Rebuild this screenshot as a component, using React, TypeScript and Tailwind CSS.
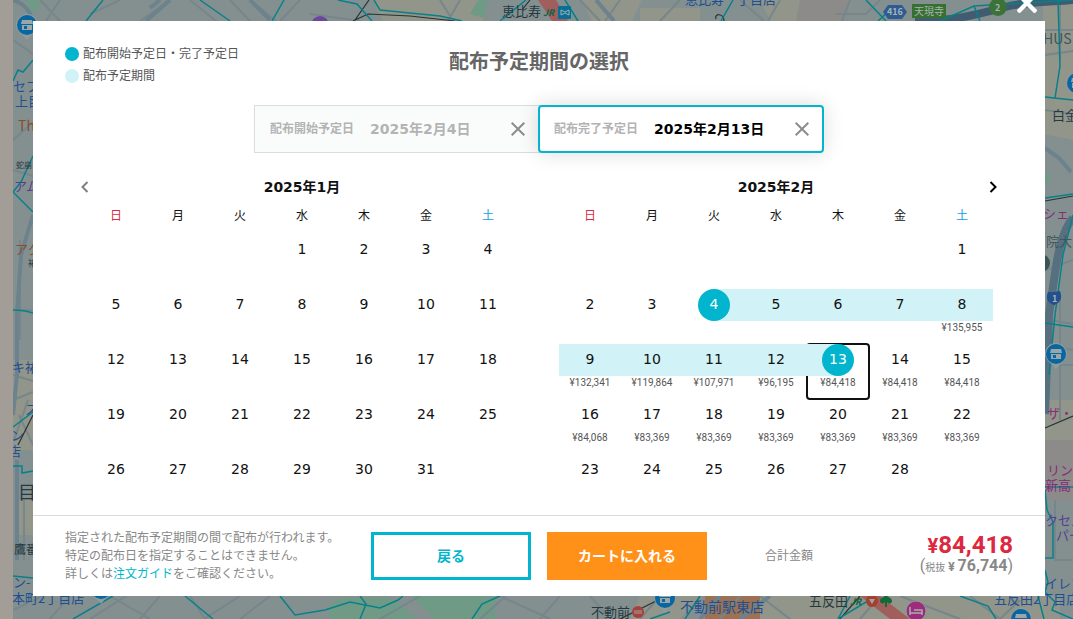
import React, { useState } from 'react';
import { clsx } from 'clsx';

const WEEKDAYS = ['日', '月', '火', '水', '木', '金', '土'];

const PRICES: Record<number, string> = {
  8: '135,955',
  9: '132,341',
  10: '119,864',
  11: '107,971',
  12: '96,195',
  13: '84,418',
  14: '84,418',
  15: '84,418',
  16: '84,068',
  17: '83,369',
  18: '83,369',
  19: '83,369',
  20: '83,369',
  21: '83,369',
  22: '83,369',
};

interface CloseIconProps {
  className?: string;
  strokeWidth?: number;
}

function CloseIcon({ className, strokeWidth = 2 }: CloseIconProps) {
  return (
    <svg viewBox="0 0 14 14" className={className} fill="none" stroke="currentColor" strokeWidth={strokeWidth} aria-hidden="true">
      <path d="M0.7 0.7 13.3 13.3M13.3 0.7 0.7 13.3" />
    </svg>
  );
}

function ShopPin({ x, y }: { x: number; y: number }) {
  return (
    <g transform={`translate(${x} ${y})`}>
      <path d="M-11 0a11 11 0 1 1 22 0c0 7-7 9-11 15c-4-6-11-8-11-15z" fill="#8f9b9c" />
      <circle r="10" fill="#0a66a0" />
      <path d="M-5-5h10l1 4h-12zM-5 0h10v5h-10z" fill="#9aa7a8" />
      <path d="M-3 1h3v3h-3z" fill="#0a66a0" />
    </g>
  );
}

function MapBackground() {
  return (
    <svg
      className="absolute inset-0 h-full w-full font-['Noto_Sans_CJK_JP',sans-serif]"
      viewBox="0 0 1073 619"
      preserveAspectRatio="xMidYMid slice"
      aria-hidden="true"
    >
      <rect width="1073" height="619" fill="#849090" />
      {/* blocks */}
      <g fill="#92958a">
        <path d="M373 0h110v21h-100zM582 0h60l-10 21h-40zM640 8h60v13h-60zM760 0h40v21h-30zM1043 0h30v140l-30-6z" />
        <path d="M13 360h20v90h-20zM17 500h16v35h-16zM640 596h60l-20 23h-50zM760 596h300v23h-300zM1045 400h28v45h-28z" />
      </g>
      <path d="M800 0h48l-8 21h-44zM1045 440h28v60h-28z" fill="#8d8a8a" />
      <path d="M26 0h12l2 9-9 3zM470 14l8-14h10l-4 18zM1045 173h4v10h-4zM411 596h84v23h-60zM330 604l12-6h50l26 21h-90z" fill="#6f9a86" />
      <path d="M705 596h55v23h-55z" fill="#9b7354" />
      {/* streets */}
      <g fill="none" stroke="#76868b" strokeWidth="2">
        <path d="M40 0l20 21M60 0l-14 21M120 0l-30 14M140 21l30-21M190 0l26 21M230 0l20 21M250 0l26 21M300 0l-20 21M310 14l50 7M440 0l10 16M460 0l-12 21M580 0l20 21M620 0l-15 21M680 0l-20 21M740 0l24 21M780 0l-12 21M850 0l-8 21M880 0l-14 14h-30" />
        <path d="M13 40l20 14M13 140l20-18M13 170l20 6M20 240v34M17 310h16M20 280v60M13 375l20 6M13 400l20-8M19 415l14 30M28 400l-14 40M17 545h16M24 500v60" />
        <path d="M13 610l30-14M50 619l20-23M90 619l36-23M110 596l40 23M160 596l-20 23M190 596l15 23M240 596l-36 23M270 596l-30 23M380 619l40-23M480 619l26-23M500 596l50 23M560 596l-20 23M590 596l20 23M640 619l20-23M720 619l20-23M760 596l30 23M860 619l20-23M900 596l60 23M970 596l30 23M1020 600l-20 19" />
        <path d="M1045 30h28M1045 55l28-4M1060 0v60M1045 110l28 4M1045 270l28-10M1050 320l23 4M1048 345l25 5M1045 365h28M1060 300v120M1055 500v60h18" />
      </g>
      <g fill="none" stroke="#6c828c" strokeWidth="4">
        <path d="M170 0l-24 21M33 215l-12 40-4 60v60l-4 40M17 460v100M160 0l-10 8M596 0l18 21M1045 148l14 10 12 14" />
        <path d="M13 0c12 4 16 10 20 21M740 619l30-23M250 0l20 20M720 596l-20 23" />
      </g>
      {/* main roads */}
      <path d="M915 21c40 0 60-6 90-14 24-6 50-5 68-7" fill="none" stroke="#3f5c70" strokeWidth="8" />
      <path d="M1073 218c-16 18-18 60-24 96l-4 100" fill="none" stroke="#56707f" strokeWidth="8" />
      <path d="M538 0h18l12 21h-16zM890 619l-30-23h20l30 23z" fill="#a05f5d" />
      {/* railways */}
      <path d="M369 0l-14 20M353 21l15-7 42 2 45 5M530 0l-8 10M716 19c-2-6 8-6 8 2M33 415l-15 30M620 619l60-30M840 619l20-23M1045 201l28-5M1045 428l28-12" fill="none" stroke="#273333" strokeWidth="1.2" />
      {/* area borders */}
      <g fill="none" stroke="#08808a" strokeWidth="1.5">
        <path d="M103 0L86 21M200 0l30 21M284 0l-12 21M338 0l19 4 7 8 8 9M374 0l6 10 60 6 22 5M526 0l-26 21M565 0l13 21M733 0l-12 21M866 0l20 21M890 10l-12 11M940 21l34-15 6 15M974 6l99-6M1058 0l2 66-5 32M1045 97l28 3" />
        <path d="M33 60L23 72l-5-2-5 11M33 156l-12 26-8 10 20 20M13 310c8 0 14 1 20 3M13 427l20-15M13 466h9v7l11-2M13 576l20 2M73 619l40-23M185 596l28 23M280 596l15 19 30-5 25-8 30 6 18-8 5-4M360 596l6 8-6 15M500 596l-18 8-10 15M670 612l-20 7M700 596l-15 23M850 596l-12 23M876 596l-38 23M960 596l28 10 8 13M1045 198l28-4M1073 215l-10 40-8 60-6 60M1045 323l28 4M1045 487h28M1045 490l2 20 6 12v36h-8M1045 570l3 12-3 10 10 10-3 8 21 9M1038 596l6 23" />
      </g>
      {/* markers */}
      <ShopPin x={27} y={25} />
      <ShopPin x={1077} y={83} />
      <ShopPin x={1056} y={354} />
      <ShopPin x={101} y={589} />
      <ShopPin x={665} y={598} />
      <ShopPin x={1021} y={619} />
      <circle cx="320" cy="25" r="9" fill="#6a479c" />
      <circle cx="916" cy="611" r="10" fill="#9c2c7c" stroke="#8f9b9c" />
      <path d="M910 607v8M910 613h12v2M914 610h8v3" stroke="#a9adad" strokeWidth="1.5" fill="none" />
      <circle cx="1041" cy="263" r="9" fill="#3d5257" />
      <rect x="558" y="6" width="13" height="13" rx="1" fill="#087094" />
      <path d="M561 10l4 2 4-2v5l-4-2-4 2z" stroke="#a0b0b2" fill="none" />
      <path d="M883 12l5-7h14l5 7-5 7h-14z" fill="#2f5b92" />
      <rect x="912" y="4" width="34" height="14" fill="#37702f" />
      <circle cx="998" cy="7" r="9" fill="#3a7237" />
      <path d="M1048 292c4 0 8 0 12-1 3 8 0 12-6 14-6-2-9-6-6-13z" fill="#24508f" />
      <circle cx="638" cy="612" r="6" fill="#a5403c" />
      <path d="M634 611h8M634 613h8" stroke="#9aa7a8" />
      <circle cx="872" cy="601" r="6" fill="#a5402c" />
      <path d="M869 599h6l-3 5z" fill="#9aa7a8" />
      <path d="M880 601c0-3 3-3 6-6 3 3 6 3 6 6s-4 3-5 1v5h-2v-5c-1 2-5 2-5-1z" fill="#116b39" />
      {/* labels */}
      <g fontSize="13" fill="#26393f">
        <text x="502" y="16">恵比寿</text>
        <text x="591" y="617">不動前</text>
        <text x="809" y="606">五反田</text>
        <text x="1052" y="120">白金</text>
        <text x="14" y="554" fontSize="12">鷹番</text>
        <text x="18" y="499" fontSize="18">目黒</text>
        <text x="16" y="168" fontSize="8">蛇崩</text>
        <text x="28" y="266" fontSize="8">祐天寺</text>
        <text x="1046" y="246" fill="#40565b">院大</text>
        <text x="1043" y="44" fontSize="14" fill="#40565b">HUS</text>
      </g>
      <g fontSize="9" fontWeight="bold" fontStyle="italic" fill="#0e6244">
        <text x="543" y="16">JR</text>
        <text x="850" y="605">JR</text>
      </g>
      <g fontSize="13" fill="#204f91">
        <text x="685" y="4">恵比寿一丁目店</text>
        <text x="13" y="91">セブン</text>
        <text x="15" y="106">上目黒</text>
        <text x="12" y="372">キ祐天</text>
        <text x="25" y="414">ス</text>
        <text x="11" y="440">ン</text>
        <text x="8" y="456">店</text>
        <text x="13" y="587">ン-</text>
        <text x="12" y="603">本町2丁目店</text>
        <text x="680" y="612" fontSize="14">不動前駅東店</text>
        <text x="1045" y="588">イレブン</text>
        <text x="994" y="604">五反田2丁目店</text>
      </g>
      <g fontSize="13" fill="#8b4c27">
        <text x="18" y="131" fontSize="14">Th</text>
        <text x="15" y="254">アク</text>
      </g>
      <g fontSize="13" fill="#593c91">
        <text x="14" y="191">アム</text>
        <text x="1045" y="525">クセル</text>
        <text x="1056" y="540">パー</text>
      </g>
      <g fontSize="13" fill="#852d76">
        <text x="1043" y="218">シェ</text>
        <text x="1047" y="418">ザ・</text>
        <text x="1047" y="475">リン</text>
        <text x="1045" y="490">新高</text>
      </g>
      <g fontSize="9" fontWeight="bold" fill="#a5b3b5">
        <text x="887" y="15">416</text>
        <text x="914" y="15" fontSize="10" fontWeight="normal">天現寺</text>
        <text x="995" y="11">2</text>
        <text x="1052" y="302">1</text>
      </g>
      <rect width="13" height="619" fill="#a39d97" />
    </svg>
  );
}

interface DateFieldProps {
  label: string;
  value: string;
  active?: boolean;
}

function DateField({ label, value, active }: DateFieldProps) {
  return (
    <div
      className={clsx(
        'flex h-12 w-[286px] items-center',
        active
          ? 'relative -ml-0.5 rounded border-2 border-[#00b5cd] bg-white pr-[13px] pl-3.5 shadow-[0_0_20px_rgba(0,0,0,0.15)]'
          : 'border border-[#d9dcdc] bg-[#fafcfb] pr-3.5 pl-[15px]'
      )}
    >
      <button type="button" className="flex flex-1 items-center gap-4 text-left font-bold">
        <span className="text-xs text-[#b3b3b3]">{label}</span>
        <span className={clsx('text-sm', active ? 'text-black' : 'text-[#b3b3b3]')}>{value}</span>
      </button>
      <button type="button" aria-label={`${label}をクリア`} className="flex text-[#8c8c8c]">
        <CloseIcon className="size-3.5" />
      </button>
    </div>
  );
}

interface MonthNavProps {
  title: string;
  prev?: boolean;
  next?: boolean;
}

function MonthNav({ title, prev, next }: MonthNavProps) {
  return (
    <div className="flex h-5 items-center">
      <div className="w-6">
        {prev && (
          <button type="button" aria-label="前の月" className="flex h-5 w-6 items-center justify-center text-[#808080]">
            <svg viewBox="0 0 8 12" className="h-3 w-2" fill="none" stroke="currentColor" strokeWidth="2">
              <path d="M6.5 1 1.5 6l5 5" />
            </svg>
          </button>
        )}
      </div>
      <h2 className="flex-1 text-center text-sm leading-5 font-bold">{title}</h2>
      <div className="w-6">
        {next && (
          <button type="button" aria-label="次の月" className="flex h-5 w-6 items-center justify-center text-black">
            <svg viewBox="0 0 8 12" className="h-3 w-2" fill="none" stroke="currentColor" strokeWidth="2">
              <path d="M1.5 1l5 5-5 5" />
            </svg>
          </button>
        )}
      </div>
    </div>
  );
}

interface MonthTableProps {
  label: string;
  firstWeekday: number;
  days: number;
  start?: number;
  end?: number;
  prices?: Record<number, string>;
  onSelect?: (day: number) => void;
}

function MonthTable({ label, firstWeekday, days, start = 0, end = 0, prices = {}, onSelect }: MonthTableProps) {
  const weeks: number[][] = [];
  for (let first = 1 - firstWeekday; first <= days; first += 7) {
    weeks.push(WEEKDAYS.map((_, i) => first + i));
  }

  return (
    <table aria-label={label} className="w-full table-fixed border-collapse self-start">
      <thead>
        <tr>
          {WEEKDAYS.map((day, i) => (
            <th
              key={day}
              className={clsx('h-[37px] p-0 text-xs font-normal', i === 0 && 'text-[#dc2840]', i === 6 && 'text-[#149fe0]')}
            >
              {day}
            </th>
          ))}
        </tr>
      </thead>
      <tbody>
        {weeks.map((week) => (
          <tr key={week[0]}>
            {week.map((day) => (
              <td key={day} className="relative h-[55px] p-0 align-top">
                {day > 0 && day <= days && (
                  <button type="button" onClick={() => onSelect?.(day)} className="block w-full text-center">
                    {day === end && <span className="absolute -inset-px rounded border-2 border-[#111]" />}
                    <span
                      className={clsx(
                        'relative z-10 flex h-8 justify-center',
                        day > start && day < end && 'bg-[#d1f2f6]',
                        end > 0 && day === start && 'bg-linear-to-r from-transparent from-50% to-[#d1f2f6] to-50%',
                        end > 0 && day === end && 'bg-linear-to-r from-[#d1f2f6] from-50% to-transparent to-50%'
                      )}
                    >
                      <span
                        className={clsx(
                          'size-8 rounded-full text-sm leading-[30px]',
                          end > 0 && (day === start || day === end) && 'bg-[#00b5cd] text-white'
                        )}
                      >
                        {day}
                      </span>
                    </span>
                    {prices[day] && (
                      <span className="relative block font-[Roboto,sans-serif] text-[10px] leading-[14px] text-[#555]">¥{prices[day]}</span>
                    )}
                  </button>
                )}
              </td>
            ))}
          </tr>
        ))}
      </tbody>
    </table>
  );
}

export default function App() {
  const [endDay, setEndDay] = useState(13);

  return (
    <div className="relative min-h-screen overflow-hidden pt-[21px] pb-[23px] font-['DejaVu_Sans','Noto_Sans_CJK_JP',sans-serif] text-[#111]">
      <MapBackground />
      <div role="dialog" aria-label="配布予定期間の選択" className="relative mr-7 ml-[33px] bg-white">
        <button type="button" aria-label="閉じる" className="absolute right-2 bottom-full mb-2 text-white">
          <CloseIcon className="size-5" strokeWidth={3} />
        </button>

        <header className="grid grid-cols-[1fr_auto_1fr] px-8 pt-[22px]">
          <ul className="text-xs leading-[22px] text-[#555]">
            <li className="flex items-center gap-1">
              <span className="size-3.5 rounded-full bg-[#00b5cd]" />
              配布開始予定日・完了予定日
            </li>
            <li className="flex items-center gap-1">
              <span className="size-3.5 rounded-full bg-[#d1f2f6]" />
              配布予定期間
            </li>
          </ul>
          <h1 className="pt-1 text-xl leading-[30px] font-bold text-[#666]">配布予定期間の選択</h1>
        </header>

        <div className="mt-[18px] flex justify-center">
          <DateField label="配布開始予定日" value="2025年2月4日" />
          <DateField label="配布完了予定日" value={`2025年2月${endDay}日`} active />
        </div>

        <div className="mt-6 grid grid-cols-2 gap-4 px-10">
          <MonthNav title="2025年1月" prev />
          <MonthNav title="2025年2月" next />
        </div>
        <div className="grid grid-cols-2 gap-10 px-[52px] pb-1.5">
          <MonthTable label="2025年1月" firstWeekday={3} days={31} />
          <MonthTable label="2025年2月" firstWeekday={6} days={28} start={4} end={endDay} prices={PRICES} onSelect={setEndDay} />
        </div>

        <footer className="flex items-center gap-4 border-t border-[#d9dcdc] px-8 py-4">
          <p className="-my-3 w-[290px] text-xs leading-[18px] text-[#888]">
            指定された配布予定期間の間で配布が行われます。
            <br />
            特定の配布日を指定することはできません。
            <br />
            詳しくは
            <a href="#guide" className="text-[#00b5cd]">
              注文ガイド
            </a>
            をご確認ください。
          </p>
          <button type="button" className="h-12 w-40 border-3 border-[#00b5cd] bg-white text-sm font-bold text-[#00b5cd]">
            戻る
          </button>
          <button type="button" className="h-12 w-40 bg-[#ff9119] text-sm font-bold text-white">
            カートに入れる
          </button>
          <div className="flex flex-1 items-center justify-between pl-[42px]">
            <span className="text-xs text-[#888]">合計金額</span>
            <div className="text-right font-[Roboto,'Noto_Sans_CJK_JP',sans-serif]">
              <p className="text-2xl leading-5 font-bold text-[#dc2840]">
                <span className="text-xl leading-5">¥</span>84,418
              </p>
              <p className="text-base leading-5 text-[#888]">
                (<span className="text-[10px]">税抜</span>
                <span className="px-[3px] text-xs font-bold">¥</span>
                <b>76,744</b>)
              </p>
            </div>
          </div>
        </footer>
      </div>
    </div>
  );
}
